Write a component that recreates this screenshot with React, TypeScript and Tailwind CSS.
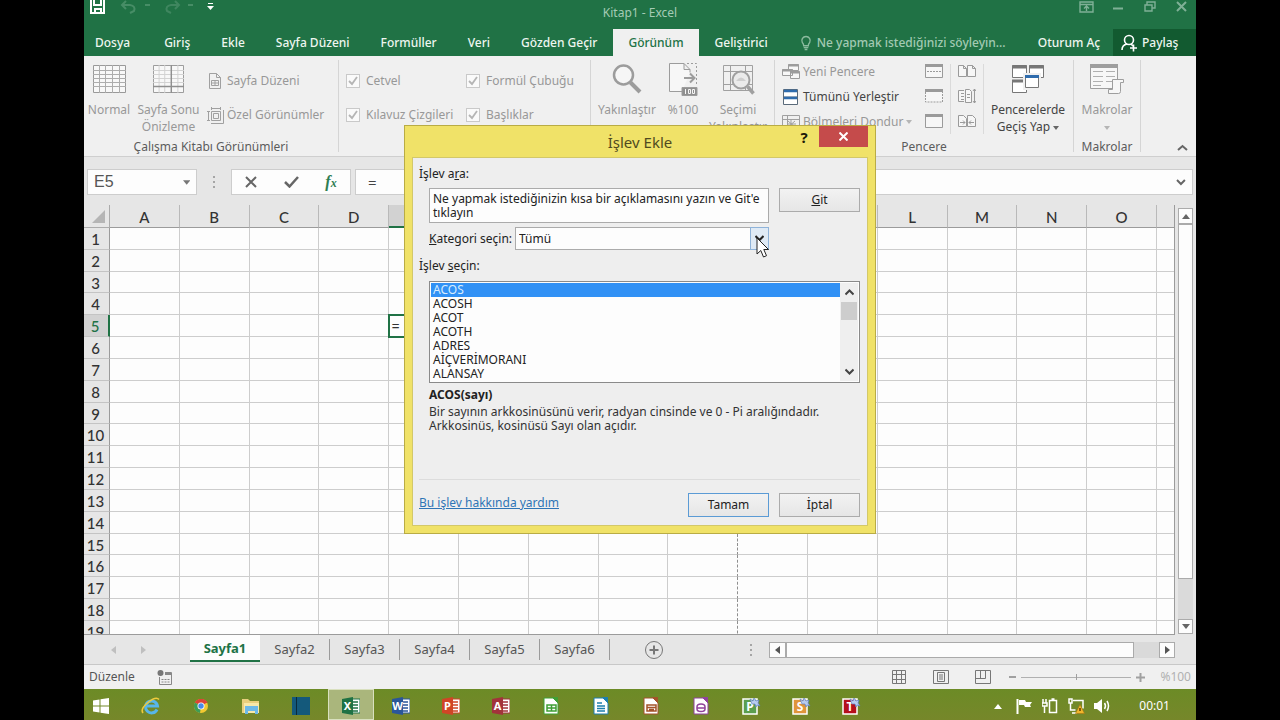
import type { ReactNode } from "react";
import clsx from "clsx";

const ribbonTabs = [
  "Dosya",
  "Giriş",
  "Ekle",
  "Sayfa Düzeni",
  "Formüller",
  "Veri",
  "Gözden Geçir",
  "Görünüm",
  "Geliştirici",
];
const columns = ["A", "B", "C", "D", "E", "F", "G", "H", "I", "J", "K", "L", "M", "N", "O"];
const rows = Array.from({ length: 19 }, (_, i) => i + 1);
const sheets = ["Sayfa1", "Sayfa2", "Sayfa3", "Sayfa4", "Sayfa5", "Sayfa6"];
const functions = ["ACOS", "ACOSH", "ACOT", "ACOTH", "ADRES", "AİÇVERİMORANI", "ALANSAY"];

/* ---------- title bar and tabs ---------- */

function TitleBar() {
  return (
    <div className="grid h-[28px] shrink-0 grid-cols-3 bg-[#207245]">
      <div className="flex pl-[6px]">
        <svg width="130" height="16" viewBox="0 0 130 16" fill="none">
          <path d="M1 0v13h13V0M4 0v5h7V0M5 13V9h6v4" stroke="#fff" strokeWidth="2" />
          <path d="M36 1l-4 4 4 4M33 5h7q6 1 4 6l-4 2" stroke="#478d66" strokeWidth="2" />
          <path d="M55 5h5M98 5h5" stroke="#478d66" strokeWidth="2" />
          <path d="M85 1l4 4-4 4M88 5h-7q-6 1-4 6l4 2" stroke="#3f865f" strokeWidth="2" />
          <path d="M118 3.500h5" stroke="#fff" />
          <path d="M117 6h7l-3.500 4z" fill="#fff" />
        </svg>
      </div>
      <h1 className="self-center pb-[2px] text-center text-xs text-[#a5cbb5]">Kitap1 - Excel</h1>
      <div className="flex justify-end pr-[8px]">
        <svg width="112" height="16" viewBox="0 0 112 16" fill="none" stroke="#7fb096" strokeWidth="1.400">
          <path d="M4 2h13v10H4zM4 4.500h13M10.500 11V6M8 8.500L10.500 6 13 8.500" />
          <path d="M37 8.500h10" strokeWidth="2" />
          <path d="M69 5h7v6h-7zM71 5V2h8v6h-3" />
          <path d="M101 2l9 9M110 2l-9 9" strokeWidth="2" />
        </svg>
      </div>
    </div>
  );
}

function TabStrip() {
  return (
    <nav className="flex h-[28px] shrink-0 items-stretch bg-[#207245] pt-px text-xs font-medium text-[#eef6f0]">
      <div className="flex flex-1 items-stretch gap-px">
        {ribbonTabs.map((tab) => (
          <button
            key={tab}
            className={clsx(
              tab === "Dosya" ? "pr-[18px] pl-[11px]" : "px-[15px]",
              tab === "Görünüm" && "bg-[#f0f0f0] text-[#207245]",
            )}
          >
            {tab}
          </button>
        ))}
        <label className="ml-4 flex flex-1 items-center gap-[5px] text-[#a3cab3]">
          <svg width="13" height="16" viewBox="0 0 13 16" fill="none" stroke="#8cbb9f" strokeWidth="1.500">
            <path d="M4 11q0-2-1.500-3.500a4.500 4.500 0 1 1 8 0Q9 9 9 11zM4 13h5M5 15h3" />
          </svg>
          <input
            className="w-full min-w-0 bg-transparent font-medium placeholder:text-[#a3cab3]"
            placeholder="Ne yapmak istediğinizi söyleyin..."
          />
        </label>
      </div>
      <button className="w-[88px] text-center">Oturum Aç</button>
      <button className="flex w-[83px] items-center gap-1 bg-[#125a30] pl-2">
        <svg width="17" height="18" viewBox="0 0 17 18" fill="none" stroke="#fff" strokeWidth="1.600">
          <circle cx="8" cy="6" r="4.500" />
          <path d="M1 16q0-5 5-6M10 10l2 2M9 14h7M12.500 10.500v7" />
        </svg>
        Paylaş
      </button>
    </nav>
  );
}

/* ---------- ribbon ---------- */

function Group({ label, className, children }: { label?: string; className?: string; children: ReactNode }) {
  return (
    <section className={clsx("flex shrink-0 pt-1", className)}>
      <div className="flex min-w-0 flex-1 flex-col">
        <div className="flex h-[78px] shrink-0">{children}</div>
        <div className="text-center text-[12px] leading-[18px] text-[#5c5c5c]">{label}</div>
      </div>
      <div className="mb-1 w-px bg-[#d5d5d5]" />
    </section>
  );
}

function BigButton({ icon, className, children }: { icon: ReactNode; className?: string; children: ReactNode }) {
  return (
    <button
      className={clsx("flex shrink-0 flex-col items-center text-center text-[12px] leading-[17px]", className)}
    >
      <span className="flex h-[41px] shrink-0 items-center pb-1">{icon}</span>
      <span className="whitespace-nowrap">{children}</span>
    </button>
  );
}

function Check({ label }: { label: string }) {
  return (
    <label className="flex items-center gap-[6px] whitespace-nowrap">
      <span className="relative flex">
        <input
          type="checkbox"
          defaultChecked
          disabled
          className="size-[14px] appearance-none border border-[#c9c9c9] bg-[#fafafa]"
        />
        <svg className="absolute inset-0" width="14" height="14" viewBox="0 0 14 14" fill="none">
          <path d="M3 7l3 3 5-7" stroke="#b5b5b5" strokeWidth="1.800" />
        </svg>
      </span>
      {label}
    </label>
  );
}

function SheetIcon({ breaks }: { breaks?: boolean }) {
  return (
    <svg width={breaks ? 31 : 33} height="28" viewBox="0 0 33 28" preserveAspectRatio="none" fill="none">
      <path d="M.5.5h32v27H.5z" stroke="#9a9a9a" fill="#f8f8f8" />
      <path d="M0 5.500h33M0 9.500h33M0 13.500h33M0 17.500h33M0 21.500h33" stroke={breaks ? "#d2d2d2" : "#adadad"} />
      <path d="M6.500 0v28M12.500 0v28M19.500 0v28M26.500 0v28" stroke={breaks ? "#d2d2d2" : "#adadad"} />
      {breaks && <path d="M19.500 0v28M0 21.500h33" stroke="#8f8f8f" strokeWidth="1.500" />}
    </svg>
  );
}

function Caret({ light }: { light?: boolean }) {
  return (
    <svg className="inline-block" width="6" height="4" viewBox="0 0 6 4">
      <path d="M0 0h6L3 4z" fill={light ? "#b5b5b5" : "#666"} />
    </svg>
  );
}

function Ribbon() {
  return (
    <div className="flex h-[101px] shrink-0 overflow-hidden border-b border-[#cfcfcf] bg-[#f0f0f0] text-[12px] text-[#989898]">
      <Group label="Çalışma Kitabı Görünümleri" className="w-[255px]">
        <BigButton className="w-[50px]" icon={<SheetIcon />}>
          Normal
        </BigButton>
        <BigButton className="w-[69px]" icon={<SheetIcon breaks />}>
          Sayfa Sonu
          <br />
          Önizleme
        </BigButton>
        <div className="flex flex-col gap-[14px] pt-[11px] pl-[4px]">
          <button className="flex h-5 items-center gap-[5px] whitespace-nowrap">
            <svg width="15" height="16" viewBox="0 0 15 16" fill="none" stroke="#a0a0a0">
              <path d="M2.500.5h7l4 4v11h-11zM9.500.5v4h4M4.500 7.500h7v5h-7zM4.500 10h7M8 7.500v5" />
            </svg>
            Sayfa Düzeni
          </button>
          <button className="flex h-5 items-center gap-[3px] whitespace-nowrap">
            <svg width="17" height="17" viewBox="0 0 17 17" fill="none" stroke="#a0a0a0">
              <path d="M4.500 4.500h9v9h-9zM6.500 6.500h5v5h-5zM4.500 1.500h9M4.500 0v3M13.500 0v3M1.500 4.500v9M0 4.500h3M0 13.500h3M16.500 3v13.500H4" />
            </svg>
            Özel Görünümler
          </button>
        </div>
      </Group>

      <Group className="w-[252px]">
        <div className="grid flex-1 grid-cols-[120px_1fr] content-start gap-y-[14px] pt-[11px] pl-[7px] *:h-5">
          <Check label="Cetvel" />
          <Check label="Formül Çubuğu" />
          <Check label="Kılavuz Çizgileri" />
          <Check label="Başlıklar" />
        </div>
      </Group>

      <Group className="w-[184px]">
        <BigButton
          className="w-[72px]"
          icon={
            <svg width="30" height="30" viewBox="0 0 30 30" fill="none" stroke="#9c9c9c">
              <circle cx="11.500" cy="11" r="9.500" strokeWidth="2.500" fill="#f6f6f6" />
              <path d="M18.500 18.500l9.500 9.500" strokeWidth="4" />
            </svg>
          }
        >
          Yakınlaştır
        </BigButton>
        <BigButton
          className="w-[40px]"
          icon={
            <svg width="30" height="34" viewBox="0 0 30 34" fill="none" stroke="#9c9c9c">
              <path d="M14 29.500H1.500v-28H16l6 6v3M16 1.500v6h6" fill="#f7f7f7" />
              <path d="M19 1.500h9.500V24" strokeDasharray="2 2" />
              <path d="M16 16h10M22 11.500l4.500 4.500-4.500 4.500" strokeWidth="2" />
              <path d="M14 25.500h15v8H14z" fill="#8f8f8f" />
              <path d="M17.500 27v5M20.500 27.500h2v4h-2zM24.500 27.500h2v4h-2z" stroke="#f5f5f5" />
            </svg>
          }
        >
          %100
        </BigButton>
        <BigButton
          className="w-[70px]"
          icon={
            <svg width="34" height="32" viewBox="0 0 34 32" fill="none" stroke="#a0a0a0">
              <path d="M2.500 2.500h29v25h-29zM2.500 8.500h29M2.500 21.500h29M9.500 2.500v25M24.500 2.500v25" />
              <circle cx="20" cy="17" r="8.500" strokeWidth="2" fill="#ebebeb" />
              <path d="M15 18q5-7 10 0z" fill="#cfcfcf" stroke="none" />
              <path d="M26.500 23.500l6 7" strokeWidth="3.500" />
            </svg>
          }
        >
          Seçimi
          <br />
          Yakınlaştır
        </BigButton>
      </Group>

      <Group label="Pencere" className="w-[299px]">
        <div className="flex w-[142px] shrink-0 flex-col gap-[5px] pt-[2px] pl-[7px]">
          <button className="flex h-5 items-center gap-[3px] whitespace-nowrap">
            <svg width="18" height="16" viewBox="0 0 18 16" fill="#f7f7f7" stroke="#9c9c9c">
              <path d="M6.500.5h10v6h-10zM8.500 7.500h9v7h-9zM.5 5.500h10v6H.5z" />
              <path d="M6 1.500h11M8 8.500h10M0 6.500h11" strokeWidth="2" />
            </svg>
            Yeni Pencere
          </button>
          <button className="flex h-5 items-center gap-[5px] pl-[1px] whitespace-nowrap text-[#444]">
            <svg width="15" height="16" viewBox="0 0 15 16" fill="#fff" stroke="#5a6a7a">
              <path d="M.5.5h14v15H.5zM.5 8h14" />
              <path d="M1 2h13M1 9h13" stroke="#2f6cad" strokeWidth="2.500" />
            </svg>
            Tümünü Yerleştir
          </button>
          <button className="flex h-5 items-center gap-[3px] whitespace-nowrap">
            <svg width="18" height="14" viewBox="0 0 18 14" fill="none" stroke="#a0a0a0">
              <path d="M.5.5h17v13H.5zM.5 4.500h17M5.500.5v13M9 5v8M6 9h8M6 6l7 6M13 6l-7 6" />
            </svg>
            Bölmeleri Dondur
            <Caret light />
          </button>
        </div>
        <div className="flex w-[33px] shrink-0 flex-col items-center gap-[11px] pt-[4px]">
          {["M2 7.500h14", "M.5 3v10h17V3", ""].map((inner, i) => (
            <button key={i} aria-label="Bölme">
              <svg className="block" width="18" height="14" viewBox="0 0 18 14" fill="#f6f6f6" stroke="#9a9a9a">
                <path d="M.5 1v12.500h17V1" stroke={i === 1 ? "none" : "#9a9a9a"} />
                <path d="M0 1.500h18" strokeWidth="3" />
                <path d={inner} strokeDasharray="2 1" />
              </svg>
            </button>
          ))}
        </div>
        <div className="my-1 w-px shrink-0 bg-[#dadada]" />
        <div className="flex w-[32px] shrink-0 flex-col items-center gap-[11px] pt-[4px]">
          <button aria-label="Yan Yana Görüntüle">
            <svg className="block" width="18" height="14" viewBox="0 0 18 14" fill="#f6f6f6" stroke="#9a9a9a">
              <path d="M.5 1.500h5l3 3v8h-8zM9.500 1.500h5l3 3v8h-8zM5.500 1.500v3h3M14.500 1.500v3h3" />
            </svg>
          </button>
          <button aria-label="Zaman Uyumlu Kaydırma">
            <svg className="block" width="18" height="14" viewBox="0 0 18 14" fill="#f6f6f6" stroke="#9a9a9a">
              <path d="M6 1.500H.5v11H6M7.500.5h4l2 2v11h-6zM3 4.500h3M3 7.500h3M3 10.500h3M9 5.500h3M9 8.500h3M16.500 0v14M15 2l1.500-2L18 2M15 12l1.500 2 1.500-2" />
            </svg>
          </button>
          <button aria-label="Pencere Konumunu Sıfırla">
            <svg className="block" width="18" height="14" viewBox="0 0 18 14" fill="#f6f6f6" stroke="#9a9a9a">
              <path d="M.5 1.500h5l3 3v8h-8zM9.500 1.500h5l3 3v8h-8zM2 8.500h5M5 6.500l2 2-2 2M16 8.500h-5M13 6.500l-2 2 2 2" />
            </svg>
          </button>
        </div>
        <div className="my-1 w-px shrink-0 bg-[#dadada]" />
        <BigButton
          className="w-[88px] text-[#444]"
          icon={
            <svg width="32" height="28" viewBox="0 0 32 28" fill="#fff" stroke="#777">
              <path d="M.5.5h14v12H.5zM17.500.5h14v12h-14zM.5 15.500h14v12H.5z" />
              <path d="M0 2h15M17 2h15M0 16h15" strokeWidth="3" />
              <path d="M12 9h16v15H12z" stroke="#f0f0f0" strokeWidth="2" />
              <path d="M13.500 10.500h13v12h-13z" />
              <path d="M13 11.500h14" stroke="#2f6cad" strokeWidth="3" />
            </svg>
          }
        >
          Pencerelerde
          <br />
          Geçiş Yap <Caret />
        </BigButton>
      </Group>

      <Group label="Makrolar" className="w-[67px]">
        <BigButton
          className="w-[66px]"
          icon={
            <svg width="34" height="32" viewBox="0 0 34 32" fill="#f7f7f7" stroke="#9e9e9e">
              <path d="M.5 1.500h27v24H.5z" />
              <path d="M0 3h28" strokeWidth="4" />
              <path d="M3 8.500h10M16 8.500h9M3 13.500h10M16 13.500h9M3 18.500h10M16 18.500h9M3 22.500h8" stroke="#b0b0b0" />
              <path d="M22.500 16.500h11v3h-3v9q0 2-2 2h-10v-4h4z" />
            </svg>
          }
        >
          Makrolar
          <br />
          <Caret light />
        </BigButton>
      </Group>

      <div className="flex flex-1 items-end justify-end pr-2 pb-1">
        <button aria-label="Şeridi Daralt">
          <svg width="11" height="9" viewBox="0 0 11 9" fill="none">
            <path d="M1 7l4.500-4L10 7" stroke="#666" strokeWidth="2" />
          </svg>
        </button>
      </div>
    </div>
  );
}

/* ---------- formula bar ---------- */

function FormulaBar() {
  return (
    <div className="flex h-[48px] shrink-0 items-start bg-[#e6e6e6] pt-[12px] pr-[3px] pl-[3px] *:h-[26px]">
      <div className="flex w-[110px] items-center border border-[#cdcdcd] bg-[#fdfdfd] pr-[6px] pl-[6px]">
        <input
          aria-label="Ad Kutusu"
          defaultValue="E5"
          className="w-full min-w-0 bg-transparent font-['Liberation_Sans',sans-serif] text-[16px] text-[#555]"
        />
        <svg width="8" height="5" viewBox="0 0 8 5">
          <path d="M0 0h8L4 5z" fill="#777" />
        </svg>
      </div>
      <div className="flex w-[34px] items-center justify-center">
        <svg width="3" height="12" viewBox="0 0 3 12" fill="#a5a5a5">
          <path d="M0 0h2v2H0zM0 5h2v2H0zM0 10h2v2H0z" />
        </svg>
      </div>
      <div className="flex w-[120px] items-center justify-around border border-[#cdcdcd] bg-[#fdfdfd]">
        <button aria-label="İptal">
          <svg width="12" height="12" viewBox="0 0 12 12" fill="none">
            <path d="M1 1l10 10M11 1L1 11" stroke="#666" strokeWidth="2" />
          </svg>
        </button>
        <button aria-label="Gir">
          <svg width="15" height="12" viewBox="0 0 15 12" fill="none">
            <path d="M1 6l4.500 4.500L14 1" stroke="#666" strokeWidth="2.500" />
          </svg>
        </button>
        <button className="font-['Liberation_Serif',serif] text-[16px] leading-none font-bold text-[#2f7d52] italic">
          f<span className="text-[12px]">x</span>
        </button>
      </div>
      <div className="ml-1 flex flex-1 items-center border border-[#cdcdcd] bg-[#fdfdfd] pr-[6px] pl-[12px]">
        <input
          aria-label="Formül Çubuğu"
          defaultValue="="
          className="w-full min-w-0 bg-transparent text-[15px] text-[#444]"
        />
        <svg width="10" height="7" viewBox="0 0 10 7" fill="none">
          <path d="M1 1l4 4 4-4" stroke="#666" strokeWidth="2" />
        </svg>
      </div>
    </div>
  );
}

/* ---------- grid ---------- */

function SheetGrid() {
  return (
    <div className="flex min-h-0 flex-1 bg-[#e6e6e6]">
      <div className="min-w-0 flex-1 overflow-hidden border-r border-b border-[#9b9b9b]">
        <table className="h-[438px] w-full table-fixed border-separate border-spacing-0 font-['Lato',sans-serif] text-[15px] leading-none text-[#333]">
          <colgroup>
            <col className="w-[26px]" />
            {columns.map((c) => (
              <col key={c} />
            ))}
            <col className="w-[17px]" />
          </colgroup>
          <thead>
            <tr className="h-[23px]">
              <th className="border-r border-b border-[#ababab] bg-[#e6e6e6] p-0">
                <svg className="ml-auto mr-[4px]" width="13" height="13" viewBox="0 0 13 13">
                  <path d="M13 0v13H0z" fill="#b5b5b5" />
                </svg>
              </th>
              {columns.map((c) => (
                <th
                  key={c}
                  className={clsx(
                    "border-r border-r-[#b9b9b9] p-0 pt-[2px] font-medium",
                    c === "E"
                      ? "border-b-2 border-b-[#207245] bg-[#d2d2d2] text-[#207245]"
                      : "border-b border-b-[#9b9b9b] bg-[#e6e6e6]",
                  )}
                >
                  {c}
                </th>
              ))}
              <th className="border-b border-[#9b9b9b] bg-[#e6e6e6]" />
            </tr>
          </thead>
          <tbody>
            {rows.map((r) => (
              <tr key={r}>
                <th
                  className={clsx(
                    "border-b border-b-[#c4c4c4] p-0 pt-[2px] pr-[2px] font-medium",
                    r === 5
                      ? "border-r-2 border-r-[#207245] bg-[#d2d2d2] text-[#207245]"
                      : "border-r border-r-[#9b9b9b] bg-[#e6e6e6]",
                  )}
                >
                  {r}
                </th>
                {columns.map((c) => (
                  <td
                    key={c}
                    className={clsx(
                      "border-r border-b border-b-[#cdcdcd] bg-[#fdfdfd] p-0",
                      c === "I" ? "[border-right-style:dashed] border-r-[#8f8f8f]" : "border-r-[#cdcdcd]",
                      c === "E" && r === 5 && "pt-[2px] pl-[2px] outline-2 -outline-offset-1 outline-[#207245]",
                    )}
                  >
                    {c === "E" && r === 5 && "="}
                  </td>
                ))}
                <td className="border-b border-b-[#cdcdcd] bg-[#fdfdfd] p-0" />
              </tr>
            ))}
          </tbody>
        </table>
      </div>
      <div className="flex w-[21px] flex-col items-center pt-[3px] pb-[1px]">
        <button
          aria-label="Yukarı"
          className="flex h-[16px] w-[15px] shrink-0 items-center justify-center border border-[#ababab] bg-[#fdfdfd]"
        >
          <svg width="8" height="5" viewBox="0 0 8 5">
            <path d="M0 5h8L4 0z" fill="#666" />
          </svg>
        </button>
        <div className="flex w-[15px] flex-1 flex-col bg-[#dadada]">
          <div className="h-[355px] border border-[#ababab] bg-[#fdfdfd]" />
        </div>
        <button
          aria-label="Aşağı"
          className="flex h-[15px] w-[15px] shrink-0 items-center justify-center border border-[#ababab] bg-[#fdfdfd]"
        >
          <svg width="8" height="5" viewBox="0 0 8 5">
            <path d="M0 0h8L4 5z" fill="#666" />
          </svg>
        </button>
      </div>
    </div>
  );
}

function SheetTabs() {
  return (
    <div className="flex h-[30px] shrink-0 border-b border-[#c8c8c8] bg-[#e6e6e6]">
      <div className="flex w-[106px] items-center gap-[25px] pl-[27px]">
        <svg width="5" height="8" viewBox="0 0 5 8">
          <path d="M5 0v8L0 4z" fill="#bfbfbf" />
        </svg>
        <svg width="5" height="8" viewBox="0 0 5 8">
          <path d="M0 0v8l5-4z" fill="#bfbfbf" />
        </svg>
      </div>
      {sheets.map((s, i) => (
        <button
          key={s}
          className={clsx(
            "flex w-[70px] items-center justify-center text-[13px]",
            i === 0
              ? "mb-[2px] border-b-2 border-[#207245] bg-[#fdfdfd] pt-[3px] font-bold text-[#207245]"
              : "text-[#555]",
          )}
        >
          {i > 0 && <span className="flex-1 text-center">{s}</span>}
          {i > 0 && <span className="h-[21px] w-px bg-[#9b9b9b]" />}
          {i === 0 && s}
        </button>
      ))}
      <button aria-label="Yeni Sayfa" className="ml-[34px]">
        <svg width="20" height="20" viewBox="0 0 20 20" fill="none" stroke="#777">
          <circle cx="10" cy="10" r="8.500" />
          <path d="M10 5.500v9M5.500 10h9" strokeWidth="2" />
        </svg>
      </button>
      <div className="flex flex-1 items-center justify-end pr-[21px]">
        <svg className="mr-[16px]" width="3" height="12" viewBox="0 0 3 12" fill="#a5a5a5">
          <path d="M0 0h2v2H0zM0 5h2v2H0zM0 10h2v2H0z" />
        </svg>
        <button
          aria-label="Sola"
          className="flex h-[16px] w-[17px] items-center justify-center border border-[#ababab] bg-[#fdfdfd]"
        >
          <svg width="5" height="8" viewBox="0 0 5 8">
            <path d="M5 0v8L0 4z" fill="#555" />
          </svg>
        </button>
        <div className="flex h-[16px] w-[373px] bg-[#dadada]">
          <div className="w-[348px] border border-[#ababab] bg-[#fdfdfd]" />
        </div>
        <button
          aria-label="Sağa"
          className="flex h-[16px] w-[16px] items-center justify-center border border-[#ababab] bg-[#fdfdfd]"
        >
          <svg width="5" height="8" viewBox="0 0 5 8">
            <path d="M0 0v8l5-4z" fill="#555" />
          </svg>
        </button>
      </div>
    </div>
  );
}

function StatusBar() {
  return (
    <div className="flex h-[24px] shrink-0 items-center bg-[#f0f0f0] px-[5px] text-xs text-[#555]">
      <span>Düzenle</span>
      <svg className="ml-[22px]" width="15" height="15" viewBox="0 0 15 15" fill="none" stroke="#888">
        <path d="M2.500 7v7.500h12V2.500H8M8 4h6" />
        <path d="M8 3.500h6" strokeWidth="3" />
        <path d="M4.500 9.500h8M4.500 12h8" strokeDasharray="2 1" />
        <circle cx="3.500" cy="3" r="3" fill="#777" stroke="none" />
      </svg>
      <div className="ml-auto flex items-center gap-[26px]">
        <svg width="16" height="14" viewBox="0 0 16 14" fill="none" stroke="#777">
          <path d="M1.500.5h13v13h-13zM1.500 4.500h13M1.500 9.500h13M5.500.5v13M10.500.5v13" />
        </svg>
        <svg width="16" height="14" viewBox="0 0 16 14" fill="none" stroke="#777">
          <path d="M.5.5h15v13H.5zM4.500 2.500h7v9h-7zM6 5h4M6 7h4M6 9h4" />
        </svg>
        <svg width="16" height="14" viewBox="0 0 16 14" fill="none" stroke="#777">
          <path d="M.5.5h15v13H.5zM.5 8.500h10v-8M5.500.5v8" />
        </svg>
      </div>
      <div className="ml-[18px] flex items-center gap-[5px]">
        <svg width="7" height="8" viewBox="0 0 7 8">
          <path d="M0 4h7" stroke="#a0a0a0" strokeWidth="2" />
        </svg>
        <span className="relative flex items-center">
          <input
            type="range"
            aria-label="Yakınlaştırma"
            className="h-px w-[110px] appearance-none bg-[#b0b0b0] [&::-webkit-slider-thumb]:appearance-none"
          />
          <span className="absolute left-1/2 h-[6px] w-px bg-[#a0a0a0]" />
        </span>
        <svg width="9" height="9" viewBox="0 0 9 9">
          <path d="M0 4.500h9M4.500 0v9" stroke="#a0a0a0" strokeWidth="2" />
        </svg>
      </div>
      <span className="w-[46px] text-right text-[#b0b0b0]">%100</span>
    </div>
  );
}

/* ---------- taskbar ---------- */

function OfficeIcon({ letter, color }: { letter: string; color: string }) {
  return (
    <svg width="18" height="18" viewBox="0 0 18 18">
      <path d="M9 2h9v14H9z" fill="#fff" stroke={color} />
      <path d="M11 5h5M11 8h5M11 11h5M11 14h5" stroke={color} strokeWidth="1.500" />
      <path d="M0 2l11-2v18L0 16z" fill={color} />
      <text x="5.500" y="13" fontSize="11" fontWeight="700" fill="#fff" textAnchor="middle">
        {letter}
      </text>
    </svg>
  );
}

function LibreIcon({ color, glyph }: { color: string; glyph: string }) {
  return (
    <svg width="16" height="18" viewBox="0 0 16 18">
      <path d="M1 1h9l5 5v11H1z" fill="#fff" stroke={color} strokeWidth="1" />
      <path d="M9 0h6v6z" fill={color} />
      <path d={glyph} stroke={color} strokeWidth="1.500" fill="none" />
    </svg>
  );
}

function PlanIcon({ letter, color }: { letter: string; color: string }) {
  return (
    <svg width="20" height="18" viewBox="0 0 20 18">
      <path d="M2 2h14v15H2z" fill={color} stroke="#fff" strokeWidth="1.500" />
      <text x="9" y="14" fontSize="12" fontWeight="700" fill="#fff" textAnchor="middle">
        {letter}
      </text>
      <path d="M9 2l3 2 1-3 2 3 3-1-1 3 2 3-3-1-1 2-1-3-3 0z" fill="#b8ccf0" stroke="#5d7fc4" strokeWidth=".7" />
    </svg>
  );
}

const taskIcons: ReactNode[] = [
  <svg width="16" height="16" viewBox="0 0 16 16" fill="#fff">
    <path d="M0 2.500l6.500-1v6H0zM7.500 1.300L16 0v7.500H7.500zM0 8.500h6.500v6l-6.500-1zM7.500 8.500H16V16l-8.500-1.300z" />
  </svg>,
  <svg width="20" height="18" viewBox="0 0 20 18" fill="none">
    <path d="M16 12.500a6 6 0 1 1 .5-3.500H6" stroke="#58b6ea" strokeWidth="3" />
    <path d="M2 16Q-1 12 7 5.500T18 2.500" stroke="#f0cb3c" strokeWidth="1.600" />
  </svg>,
  <svg width="16" height="16" viewBox="0 0 16 16">
    <circle cx="8" cy="8" r="7" fill="#f3c931" />
    <path d="M8 8L1.900 4.500A7 7 0 0 1 14.100 4.500z" fill="#dc4437" />
    <path d="M8 8L1.900 4.500A7 7 0 0 0 7 15z" fill="#3f9d55" />
    <path d="M2 4.500A7 7 0 0 1 14.500 5H8z" fill="#dc4437" />
    <circle cx="8" cy="8" r="3.500" fill="#fff" />
    <circle cx="8" cy="8" r="2.700" fill="#4a8ae8" />
  </svg>,
  <svg width="20" height="18" viewBox="0 0 20 18">
    <path d="M1 2h6l2 2h9v12H1z" fill="#e8cf7d" />
    <path d="M3 6h15v10H3z" fill="#f7e8a8" />
    <path d="M4 9h13v8h-3v-3H7v3H4z" fill="#6cb9e8" />
  </svg>,
  <svg width="18" height="18" viewBox="0 0 18 18">
    <path d="M0 0h18v18H0z" fill="#14597b" />
    <path d="M4.500 0v18" stroke="#0a2b3c" />
  </svg>,
  <OfficeIcon letter="X" color="#1f7244" />,
  <OfficeIcon letter="W" color="#2a5699" />,
  <OfficeIcon letter="P" color="#d04526" />,
  <OfficeIcon letter="A" color="#a2333b" />,
  <LibreIcon color="#3f9f35" glyph="M4 8h9v6H4zM4 11h9M8.500 8v6" />,
  <LibreIcon color="#1c7fae" glyph="M4 6h5M4 9h8M4 11.500h8M4 14h8" />,
  <LibreIcon color="#a4532a" glyph="M4 8h9v6H4zM4 10.500h9M6 12.500h5" />,
  <LibreIcon color="#90429b" glyph="M4 10q0-3 4-3t4 3v2q0 2.500-4 2.500T4 12zM4 11h8" />,
  <PlanIcon letter="P" color="#5b9e4e" />,
  <PlanIcon letter="S" color="#e0953b" />,
  <PlanIcon letter="T" color="#b5101c" />,
];

function Taskbar() {
  return (
    <div className="flex h-[31px] shrink-0 items-stretch bg-linear-to-b from-[#6c8b26] to-[#76872a] pr-[26px]">
      <div className="-ml-[8px] flex">
        {taskIcons.map((icon, i) => (
          <button
            key={i}
            className={clsx(
              "mx-[2px] flex w-[46px] items-center justify-center pt-[2px]",
              i === 5 && "border border-[#d9e0bf] bg-[#aab67c]",
            )}
          >
            {icon}
          </button>
        ))}
      </div>
      <div className="ml-auto flex items-center gap-[9px] pt-[3px] text-xs text-white">
        <svg width="8" height="5" viewBox="0 0 8 5">
          <path d="M0 5h8L4 0z" fill="#fff" />
        </svg>
        <svg className="ml-[5px]" width="17" height="16" viewBox="0 0 17 16">
          <path d="M1.500 1v15" stroke="#fff" strokeWidth="2" />
          <path d="M3 2h6l1 2h6l-2 3 1 2H9L8 7H3z" fill="#fff" />
        </svg>
        <svg width="16" height="16" viewBox="0 0 16 16" fill="none" stroke="#fff" strokeWidth="1.500">
          <path d="M7.500 2.500h7v12h-7zM9.500 1h3" />
          <path d="M1 1v4M4 1v4M0 5h5v3H0zM2.500 8v7" />
        </svg>
        <svg width="18" height="16" viewBox="0 0 18 16" fill="none" stroke="#fff" strokeWidth="1.500">
          <path d="M6 2.500h10v8M2 1h3v4H2zM3.500 5v7h5M5 15h5" />
          <path d="M13 6.500l4.500 9h-9z" fill="#f0b52c" stroke="#a87510" strokeWidth=".6" />
          <path d="M13 10v3" stroke="#5a3c00" />
        </svg>
        <svg width="17" height="16" viewBox="0 0 17 16" fill="none" stroke="#fff">
          <path d="M0 5h3l5-4v14l-5-4H0z" fill="#fff" stroke="none" />
          <path d="M10.500 5q2 3 0 6M13 3q3 5 0 10" strokeWidth="1.500" />
        </svg>
        <time className="ml-[19px]">00:01</time>
      </div>
    </div>
  );
}

/* ---------- insert function dialog ---------- */

function InsertFunctionDialog() {
  const button = "h-[24px] w-[81px] border bg-linear-to-b from-[#f2f2f2] to-[#e6e6e6]";
  return (
    <div
      role="dialog"
      aria-labelledby="dialog-title"
      className="absolute top-[125px] left-1/2 w-[472px] -translate-x-1/2 border border-[#b9ac45] bg-[#f0e268] px-[7px] pb-[7px] text-[12px] leading-[14px] text-[#222]"
    >
      <div className="relative flex h-[31px] items-center justify-center">
        <h2 id="dialog-title" className="text-[15px] text-[#4f4a20]">
          İşlev Ekle
        </h2>
        <div className="absolute top-0 right-0 flex">
          <button className="h-[22px] w-[30px] text-[15px] font-bold text-[#1c1a08]">?</button>
          <button aria-label="Kapat" className="flex h-[21px] w-[49px] items-center justify-center bg-[#c54b4b]">
            <svg width="9" height="9" viewBox="0 0 9 9" fill="none">
              <path d="M.5.5l8 8M8.500.5l-8 8" stroke="#fff" strokeWidth="2" />
            </svg>
          </button>
        </div>
      </div>

      <div className="border border-[#d3c869] bg-[#eeeeee] pt-[9px] pr-[7px] pb-[8px] pl-[6px]">
        <label htmlFor="search" className="block">
          İşlev a<u>r</u>a:
        </label>
        <div className="mt-[7px] flex items-start justify-between pl-[10px]">
          <textarea
            id="search"
            className="h-[35px] w-[340px] resize-none overflow-hidden border border-[#ababab] bg-[#fdfdfd] px-[3px] py-[3px]"
            defaultValue="Ne yapmak istediğinizin kısa bir açıklamasını yazın ve Git'e tıklayın"
          />
          <button className={clsx(button, "border-[#ababab]")}>
            <u>G</u>it
          </button>
        </div>
        <div className="mt-[4px] flex h-[23px] items-center pl-[10px]">
          <label htmlFor="category" className="w-[86px] whitespace-nowrap">
            <u>K</u>ategori seçin:
          </label>
          <div className="relative flex h-full w-[254px]">
            <select
              id="category"
              className="w-full appearance-none border border-[#ababab] bg-[#fdfdfd] pl-[3px]"
            >
              <option>Tümü</option>
            </select>
            <span className="pointer-events-none absolute top-0 right-0 flex h-full w-[19px] items-center justify-center border border-[#8fb3d9] bg-[#dfeaf5]">
              <svg width="9" height="7" viewBox="0 0 9 7" fill="none">
                <path d="M.5 1l4 4 4-4" stroke="#222" strokeWidth="2" />
              </svg>
            </span>
            <svg className="absolute top-[10px] right-0" width="13" height="21" viewBox="0 0 13 21">
              <path
                d="M1 1v16l3.800-3.500L7.500 20l3-1.300L7.800 12.500H12.500z"
                fill="#fff"
                stroke="#222"
              />
            </svg>
          </div>
        </div>
        <p className="mt-[9px]">
          İşlev <u>s</u>eçin:
        </p>
        <div className="mt-[8px] ml-[10px] flex border border-[#8a8a8a] bg-[#fdfdfd] p-px">
          <ul role="listbox" aria-label="İşlev seçin" className="flex-1">
            {functions.map((f, i) => (
              <li
                key={f}
                role="option"
                aria-selected={i === 0}
                className={clsx("h-[14px] px-[2px]", i === 0 && "bg-[#3191f5] text-[#d7ecff]")}
              >
                {f}
              </li>
            ))}
          </ul>
          <div className="flex w-[18px] flex-col items-center bg-[#efefef]">
            <svg className="my-[6px]" width="9" height="7" viewBox="0 0 9 7" fill="none">
              <path d="M.5 5.500l4-4 4 4" stroke="#444" strokeWidth="2" />
            </svg>
            <div className="h-[18px] w-[16px] bg-[#cdcdcd]" />
            <svg className="mt-auto mb-[6px]" width="9" height="7" viewBox="0 0 9 7" fill="none">
              <path d="M.5 1.500l4 4 4-4" stroke="#444" strokeWidth="2" />
            </svg>
          </div>
        </div>
        <div className="mt-[5px] ml-[10px] h-[91px] text-[#333]">
          <p className="font-bold text-[#222]">ACOS(sayı)</p>
          <p className="mt-[3px]">
            Bir sayının arkkosinüsünü verir, radyan cinsinde ve 0 - Pi aralığındadır.
            <br />
            Arkkosinüs, kosinüsü Sayı olan açıdır.
          </p>
        </div>
        <div className="flex items-center border-t border-[#dcdcdc] pt-[13px]">
          <a href="#" className="mr-auto pb-[4px] text-[#2e75b6] underline">
            Bu işlev hakkında yardım
          </a>
          <button className={clsx(button, "mr-[10px] border-[#5b9bd5]")}>Tamam</button>
          <button className={clsx(button, "border-[#ababab]")}>İptal</button>
        </div>
      </div>
    </div>
  );
}

export default function App() {
  return (
    <div className="h-screen bg-black px-[84px] font-['Noto_Sans',sans-serif]">
      <div className="flex h-full flex-col overflow-hidden">
        <TitleBar />
        <TabStrip />
        <Ribbon />
        <FormulaBar />
        <SheetGrid />
        <SheetTabs />
        <StatusBar />
        <Taskbar />
      </div>
      <InsertFunctionDialog />
    </div>
  );
}
